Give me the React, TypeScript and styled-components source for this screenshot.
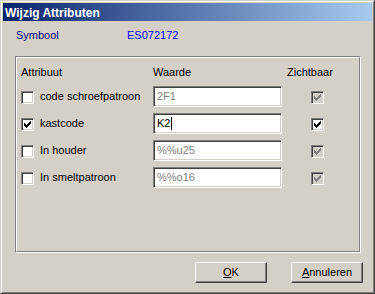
import React from 'react';
import styled, { createGlobalStyle } from 'styled-components';

const GlobalStyle = createGlobalStyle`
  html, body {
    margin: 0;
    padding: 0;
    background: #d4d0c8;
  }
  body {
    font-family: "Liberation Sans", Arial, sans-serif;
    font-size: 11px;
    color: #000;
  }
`;

interface AttributeRow {
  name: string;
  checked: boolean;
  value: string;
  editable: boolean;
  visibleEnabled: boolean;
}

const rows: AttributeRow[] = [
  { name: 'code schroefpatroon', checked: false, value: '2F1', editable: false, visibleEnabled: false },
  { name: 'kastcode', checked: true, value: 'K2', editable: true, visibleEnabled: true },
  { name: 'In houder', checked: false, value: '%%u25', editable: false, visibleEnabled: false },
  { name: 'In smeltpatroon', checked: false, value: '%%o16', editable: false, visibleEnabled: false },
];

const Window = styled.div`
  width: 375px;
  height: 294px;
  box-sizing: border-box;
  border: 1px solid;
  border-color: #d4d0c8 #404040 #404040 #d4d0c8;
  display: flex;
`;

const Frame = styled.div`
  flex: 1;
  box-sizing: border-box;
  border: 1px solid;
  border-color: #fff #808080 #808080 #fff;
  padding: 1px;
  background: #d4d0c8;
  display: flex;
  flex-direction: column;
`;

const TitleBar = styled.div`
  height: 18px;
  margin-bottom: 1px;
  padding-left: 2px;
  display: flex;
  align-items: center;
  background: linear-gradient(to right, #0a246a, #a6caf0);
`;

const Title = styled.span`
  color: #fff;
  font-weight: bold;
  font-size: 12px;
  line-height: 14px;
  padding-top: 1px;
`;

const Client = styled.div`
  flex: 1;
  display: flex;
  flex-direction: column;
  padding-top: 7px;
`;

const InfoRow = styled.div`
  display: grid;
  grid-template-columns: 111px auto;
  padding-left: 13px;
  line-height: 13px;
`;

const InfoText = styled.span<{ $color: string }>`
  color: ${(p) => p.$color};
`;

const GroupBox = styled.div`
  margin: 14px 0 0 12px;
  width: 346px;
  height: 197px;
  box-sizing: border-box;
  border: 1px solid;
  border-color: #808080 #fff #fff #808080;
  display: flex;
`;

const GroupInner = styled.div`
  flex: 1;
  border: 1px solid;
  border-color: #fff #808080 #808080 #fff;
  padding: 8px 0 0 4px;
`;

const Grid = styled.div`
  display: grid;
  grid-template-columns: 132px 134px auto;
  grid-template-rows: 17px repeat(4, 27px);
  align-items: center;
  line-height: 13px;
`;

const Header = styled.div`
  align-self: start;
`;

const AttrCell = styled.label`
  display: flex;
  align-items: center;
  gap: 6px;
`;

const Box = styled.span<{ $checked: boolean; $disabled?: boolean }>`
  width: 13px;
  height: 13px;
  margin-top: 1px;
  box-sizing: border-box;
  border: 1px solid;
  border-color: #808080 #fff #fff #808080;
  box-shadow: inset 1px 1px #404040, inset -1px -1px #d4d0c8;
  background: ${(p) => (p.$disabled ? '#d4d0c8' : '#fff')};
  display: flex;
  align-items: center;
  justify-content: center;
  flex: none;
`;

const EditBox = styled.div<{ $disabled: boolean }>`
  width: 129px;
  height: 21px;
  box-sizing: border-box;
  border: 1px solid;
  border-color: #808080 #fff #fff #808080;
  box-shadow: inset 1px 1px #404040, inset -1px -1px #d4d0c8;
  background: #fff;
  color: ${(p) => (p.$disabled ? '#808080' : '#000')};
  padding: 0 0 0 3px;
  display: flex;
  align-items: center;
`;

const Caret = styled.span`
  width: 1px;
  height: 13px;
  background: #000;
  margin-left: 1px;
`;

const VisibleCell = styled.div`
  padding-left: 24px;
  display: flex;
`;

const ButtonRow = styled.div`
  display: flex;
  justify-content: flex-end;
  gap: 24px;
  margin-top: 9px;
  padding-right: 9px;
`;

const Button = styled.button`
  width: 72px;
  height: 21px;
  box-sizing: border-box;
  padding: 0;
  border: 1px solid;
  border-color: #fff #404040 #404040 #fff;
  box-shadow: inset -1px -1px #808080;
  background: #d4d0c8;
  font-family: "Liberation Sans", Arial, sans-serif;
  font-size: 11px;
  color: #000;
  line-height: 13px;
`;

const CheckMark: React.FC<{ color: string }> = ({ color }) => {
  const tops = [2, 3, 4, 3, 2, 1, 0];
  return (
    <svg width="7" height="7" viewBox="0 0 7 7" shapeRendering="crispEdges">
      {tops.map((y, x) => (
        <rect key={x} x={x} y={y} width="1" height="3" fill={color} />
      ))}
    </svg>
  );
};

const CheckBox: React.FC<{ checked: boolean; disabled?: boolean }> = ({ checked, disabled }) => (
  <Box $checked={checked} $disabled={disabled}>
    {checked && <CheckMark color={disabled ? '#808080' : '#000'} />}
  </Box>
);

export default function App() {
  return (
    <>
      <GlobalStyle />
      <Window>
        <Frame>
          <TitleBar>
            <Title>Wijzig Attributen</Title>
          </TitleBar>
          <Client>
            <InfoRow>
              <InfoText $color="#000080">Symbool</InfoText>
              <InfoText $color="#0000ff">ES072172</InfoText>
            </InfoRow>
            <GroupBox>
              <GroupInner>
                <Grid>
                  <Header>Attribuut</Header>
                  <Header>Waarde</Header>
                  <Header>Zichtbaar</Header>
                  {rows.map((row) => (
                    <React.Fragment key={row.name}>
                      <AttrCell>
                        <CheckBox checked={row.checked} />
                        {row.name}
                      </AttrCell>
                      <EditBox $disabled={!row.editable}>
                        {row.value}
                        {row.editable && <Caret />}
                      </EditBox>
                      <VisibleCell>
                        <CheckBox checked disabled={!row.visibleEnabled} />
                      </VisibleCell>
                    </React.Fragment>
                  ))}
                </Grid>
              </GroupInner>
            </GroupBox>
            <ButtonRow>
              <Button>
                <u>O</u>K
              </Button>
              <Button>
                <u>A</u>nnuleren
              </Button>
            </ButtonRow>
          </Client>
        </Frame>
      </Window>
    </>
  );
}
